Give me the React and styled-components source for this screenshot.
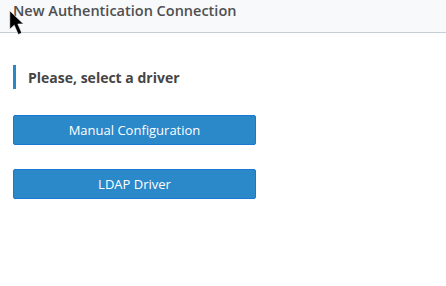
import React from 'react';
import styled, { createGlobalStyle } from 'styled-components';

const GlobalStyle = createGlobalStyle`
  body {
    margin: 0;
    background: #fff;
    font-family: "Open Sans", "Noto Sans", sans-serif;
  }
`;

const drivers = ['Manual Configuration', 'LDAP Driver'];

const App = () => {
  return (
    <Page>
      <GlobalStyle />
      <Header>
        <Title>New Authentication Connection</Title>
      </Header>
      <Content>
        <SectionTitle>Please, select a driver</SectionTitle>
        <DriverList>
          {drivers.map((name) => (
            <DriverButton key={name} type="button">
              {name}
            </DriverButton>
          ))}
        </DriverList>
      </Content>
      <Cursor viewBox="0 0 12 20" preserveAspectRatio="none">
        <path
          d="M0.6 0.6 L0.6 15.4 L4.2 12.2 L7.4 19.6 L10.2 18.4 L7.1 11.2 L11.6 11.2 Z"
          fill="#000"
          stroke="#fff"
          strokeWidth="0.5"
        />
      </Cursor>
    </Page>
  );
};

const Page = styled.div`
  position: relative;
  width: 446px;
  height: 286px;
  overflow: hidden;
`;

const Header = styled.header`
  height: 33px;
  box-sizing: border-box;
  background-color: #f7f9fb;
  border-bottom: 1px solid #c3ced6;
  padding: 1px 13px 0;
`;

const Title = styled.h1`
  margin: 0;
  font-size: 14.5px;
  line-height: 20px;
  font-weight: 600;
  color: #4f4f4f;
`;

const Content = styled.main`
  padding: 32px 13px 0;
`;

const SectionTitle = styled.h2`
  margin: 0;
  height: 24px;
  display: flex;
  align-items: center;
  border-left: 3px solid #2a88c8;
  padding-left: 12px;
  font-size: 14px;
  font-weight: 700;
  color: #454545;
`;

const DriverList = styled.div`
  display: flex;
  flex-direction: column;
  gap: 24px;
  margin-top: 26px;
`;

const DriverButton = styled.button`
  width: 243px;
  height: 30px;
  box-sizing: border-box;
  border: 1px solid #1b78d0;
  border-radius: 2px;
  background-color: #2b88c9;
  color: #fff;
  font-family: inherit;
  font-size: 13px;
  font-weight: 400;
  cursor: pointer;
`;

const Cursor = styled.svg`
  position: absolute;
  left: 9px;
  top: 10px;
  width: 15px;
  height: 25px;
`;

export default App;
